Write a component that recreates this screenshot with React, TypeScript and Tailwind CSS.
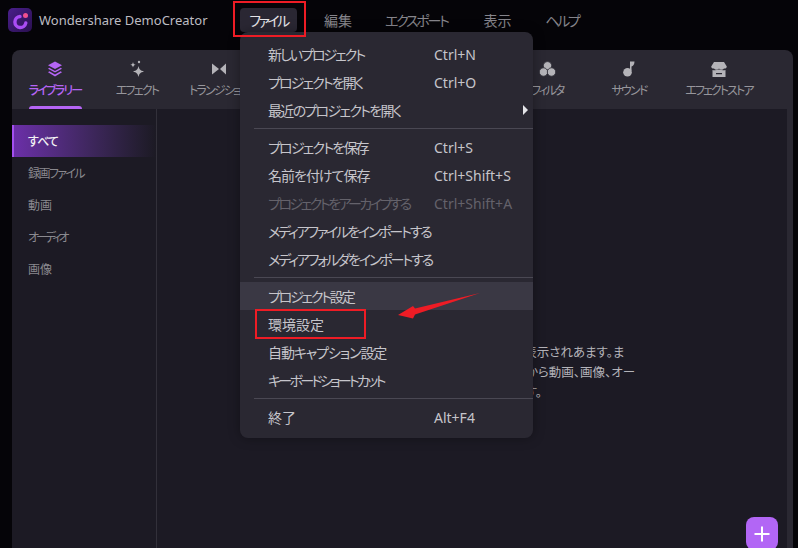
const P = "[font-feature-settings:'palt']";
const tabs = [
  { t: 'ライブラリー', w: 'w-[82px]', on: true, i: 'layers', tr: 'tracking-[-1.800px]' },
  { t: 'エフェクト', w: 'w-[82px]', i: 'spark', tr: 'tracking-[-1.800px]' },
  { t: 'トランジション', w: 'w-[82px]', i: 'bow', tr: 'tracking-[-1.800px]' },
  { t: 'テキスト', w: 'w-[82px]', i: '', tr: 'tracking-[-1.800px]' },
  { t: 'キャプション', w: 'w-[82px]', i: '', tr: 'tracking-[-1.800px]' },
  { t: 'ステッカー', w: 'w-[82px]', i: '', tr: 'tracking-[-1.800px]' },
  { t: 'フィルタ', w: 'w-[82px]', i: 'filter', tr: 'tracking-[-2.200px]' },
  { t: 'サウンド', w: 'w-[82px]', i: 'note', tr: 'tracking-[-1.800px]' },
  { t: 'エフェクトストア', w: 'w-[98px]', i: 'store', tr: 'tracking-[-1.900px]' },
];

function TabIcon({ n, on }: { n: string; on?: boolean }) {
  const c = on ? '#b565f5' : '#b4b3b8';
  if (n === 'layers')
    return (
      <svg width="16" height="16" viewBox="0 0 16 16" fill={c}>
        <path d="M8 .5l7 3.800-7 3.800-7-3.800z" />
        <path d="M2.300 6.800L8 9.900l5.700-3.100L15 7.800 8 11.600 1 7.800z" />
        <path d="M2.300 10.300L8 13.400l5.700-3.100 1.300 1L8 15.500 1 11.300z" />
      </svg>
    );
  if (n === 'spark')
    return (
      <svg width="16" height="18" viewBox="0 0 16 18" fill={c}>
        <path d="M9.500 6c.6 3.200 1.800 4.500 5.500 5.500-3.700 1-4.900 2.300-5.500 5.500-.6-3.200-1.800-4.500-5.500-5.500 3.700-1 4.900-2.300 5.500-5.500z" />
        <path d="M4 2c.4 1.800 1 2.400 2.800 2.800C5 5.200 4.400 5.800 4 7.600 3.600 5.800 3 5.200 1.200 4.800 3 4.400 3.600 3.800 4 2z" />
        <circle cx="10" cy="2" r="1.200" />
      </svg>
    );
  if (n === 'bow')
    return (
      <svg width="14" height="12" viewBox="0 0 14 12" fill={c}>
        <path d="M0 .5L7 6 0 11.500z" />
        <path d="M14 .5L8 6l6 5.500z" />
      </svg>
    );
  if (n === 'filter')
    return (
      <svg width="17" height="16" viewBox="0 0 17 16" fill={c} stroke="#2a2832" strokeWidth="0.8">
        <circle cx="8.500" cy="4.800" r="4.200" />
        <circle cx="4.500" cy="11" r="4.200" />
        <circle cx="12.500" cy="11" r="4.200" />
      </svg>
    );
  if (n === 'note')
    return (
      <svg width="12" height="16" viewBox="0 0 12 16" fill={c}>
        <circle cx="4.500" cy="11.300" r="4.300" />
        <path d="M7 .5h4.500c0 3-1.500 4.500-3 5L8.500 10H7z" />
      </svg>
    );
  if (n === 'store')
    return (
      <svg width="16" height="15" viewBox="0 0 16 15" fill={c}>
        <path d="M3 0h10l2.800 4.500a2.200 2.200 0 0 1-2.800 2 3 3 0 0 1-5 0 3 3 0 0 1-5 0A2.200 2.200 0 0 1 .2 4.500z" />
        <path d="M1.500 8c2.200.5 4 .3 6.500-.5 2.500.8 4.300 1 6.500.5v7h-13zM5 11v1.200h6V11z" fillRule="evenodd" />
      </svg>
    );
  return <span className="h-4 w-4" />;
}

function Row({ t, tr, k, dim, hi, arrow }: { t: string; tr?: string; k?: string; dim?: boolean; hi?: boolean; arrow?: boolean }) {
  return (
    <div className={`relative flex h-7 items-center pl-7 ${hi ? 'bg-[#3a3844]' : ''} ${dim ? 'text-[#64626b]' : 'text-[#c6c5cb]'}`}>
      <span className={`w-[166px] whitespace-nowrap ${P} ${tr ?? ''}`}>{t}</span>
      {k && <span className="whitespace-nowrap text-[14px] font-['Noto_Sans',sans-serif]">{k}</span>}
      {arrow && <span className="absolute right-[5px] top-[9px] h-0 w-0 border-y-[5px] border-l-[5px] border-y-transparent border-l-[#e4e4e8]" />}
    </div>
  );
}

const Sep = () => <div className="my-1 ml-[14px] h-px bg-[#4a4853]" />;

export default function App() {
  return (
    <div className="relative flex h-[548px] w-[798px] flex-col overflow-hidden bg-[#050408] font-['Noto_Sans_CJK_JP','Noto_Sans',sans-serif]">
      <header className="flex h-[50px] shrink-0 items-start pt-2">
        <div className="ml-2 flex h-6 w-6 items-center justify-center rounded-[5px] bg-gradient-to-br from-[#4a1f8c] to-[#2a1050]">
          <svg width="20" height="20" viewBox="0 0 20 20">
            <path d="M10 6.500A5.500 5.500 0 1 0 15.800 13" fill="none" stroke="#a94cf5" strokeWidth="3.400" strokeLinecap="round" />
            <circle cx="15.500" cy="5.500" r="2.500" fill="#f2508f" />
          </svg>
        </div>
        <span className="ml-[7px] mt-[3px] w-[201px] whitespace-nowrap text-[13px] leading-[18px] text-[#bdbcc2] font-['Noto_Sans',sans-serif]">Wondershare DemoCreator</span>
        <div className={`flex h-6 w-[57px] items-center justify-center rounded bg-[#2a2733] text-[14px] tracking-[-2.500px] text-[#e6e5e9] ${P}`}>ファイル</div>
        <nav className={`flex text-[14px] text-[#85848b] ${P}`}>
          <span className="ml-[27px] leading-6">編集</span>
          <span className="ml-[33px] leading-6 tracking-[-2.300px]">エクスポート</span>
          <span className="ml-[36px] leading-6">表示</span>
          <span className="ml-[34px] leading-6 tracking-[-2.500px]">ヘルプ</span>
        </nav>
      </header>

      <div className="ml-3 mr-[5px] flex flex-1 flex-col rounded-t-lg bg-[#2a2832] pr-[6px]">
        <div className="-mr-[6px] flex h-[59px] shrink-0 pl-[2px]">
          {tabs.map((b) => (
            <div key={b.t} className={`relative flex ${b.w} flex-col items-center pt-[11px]`}>
              <div className="flex h-4 items-center justify-center"><TabIcon n={b.i} on={b.on} /></div>
              <span className={`mt-1 whitespace-nowrap text-[12px] leading-[18px] ${P} ${b.tr} ${b.on ? 'font-medium text-[#b565f5]' : 'text-[#97969c]'}`}>{b.t}</span>
              {b.on && <span className="absolute bottom-0 h-[3px] w-[53px] rounded-t-sm bg-[#b565f5]" />}
            </div>
          ))}
        </div>
        <div className="flex flex-1 bg-[#1c1a24]">
          <aside className="w-[145px] shrink-0 border-r border-[#32303a] pt-4">
            <div className={`flex h-8 items-center border-l-2 border-[#a44ff0] bg-gradient-to-r from-[#6b2fa8] to-[#1c1a24] pl-[14px] text-[12px] font-medium tracking-[-1px] text-[#f2f1f4] ${P}`}>すべて</div>
            <div className={`flex h-8 items-center pl-4 text-[12px] tracking-[-1.600px] text-[#8a898f] ${P}`}>録画ファイル</div>
            <div className={`flex h-8 items-center pl-4 text-[12px] text-[#8a898f] ${P}`}>動画</div>
            <div className={`flex h-8 items-center pl-4 text-[12px] tracking-[-3px] text-[#8a898f] ${P}`}>オーディオ</div>
            <div className={`flex h-8 items-center pl-4 text-[12px] text-[#8a898f] ${P}`}>画像</div>
          </aside>
          <main className="relative flex-1">
            <div className={`pl-[235px] pt-[233px] text-[12.500px] leading-[20px] whitespace-nowrap text-[#b4b3b9] ${P}`}>
              <p>ここにメディアファイルが表示されあます。ま</p>
              <p>た、ドラッグをするか、ここから動画、画像、オー</p>
              <p>ディオをインポートできます。</p>
            </div>
            <div className="absolute bottom-[-2px] right-[9px] flex h-[33px] w-[32px] items-center justify-center rounded-lg bg-[#b266f5]">
              <svg width="18" height="18" viewBox="0 0 18 18" stroke="#fff" strokeWidth="2"><path d="M9 1.500v15M1.500 9h15" /></svg>
            </div>
          </main>
        </div>
      </div>

      <div className="absolute left-[240px] top-[32px] h-[406px] w-[293px] rounded-lg bg-[#2a2832] py-2 text-[14px] shadow-[0_0_12px_rgba(0,0,0,0.35)]">
        <Row t="新しいプロジェクト" tr="tracking-[-2px]" k="Ctrl+N" />
        <Row t="プロジェクトを開く" tr="tracking-[-1.900px]" k="Ctrl+O" />
        <Row t="最近のプロジェクトを開く" tr="tracking-[-1.700px]" arrow />
        <Sep />
        <Row t="プロジェクトを保存" tr="tracking-[-1.800px]" k="Ctrl+S" />
        <Row t="名前を付けて保存" tr="tracking-[-1px]" k="Ctrl+Shift+S" />
        <Row t="プロジェクトをアーカイブする" tr="tracking-[-2.500px]" k="Ctrl+Shift+A" dim />
        <Row t="メディアファイルをインポートする" tr="tracking-[-2.200px]" />
        <Row t="メディアフォルダをインポートする" tr="tracking-[-2.100px]" />
        <Sep />
        <Row t="プロジェクト設定" tr="tracking-[-2.200px]" hi />
        <Row t="環境設定" />
        <Row t="自動キャプション設定" tr="tracking-[-1.100px]" />
        <Row t="キーボードショートカット" tr="tracking-[-2.700px]" />
        <Sep />
        <Row t="終了" k="Alt+F4" />
      </div>

      <div className="absolute left-[233px] top-px h-9 w-[73px] border-2 border-[#ee1c25]" />
      <div className="absolute left-[255px] top-[309px] h-[30px] w-[111px] border-2 border-[#ee1c25]" />
      <svg className="absolute left-[395px] top-[288px]" width="90" height="34" viewBox="0 0 90 34">
        <path d="M85 5L20 20.500l-2-2.500L3 27l15 3.500 2-4z" fill="#ee1c25" />
      </svg>
    </div>
  );
}
